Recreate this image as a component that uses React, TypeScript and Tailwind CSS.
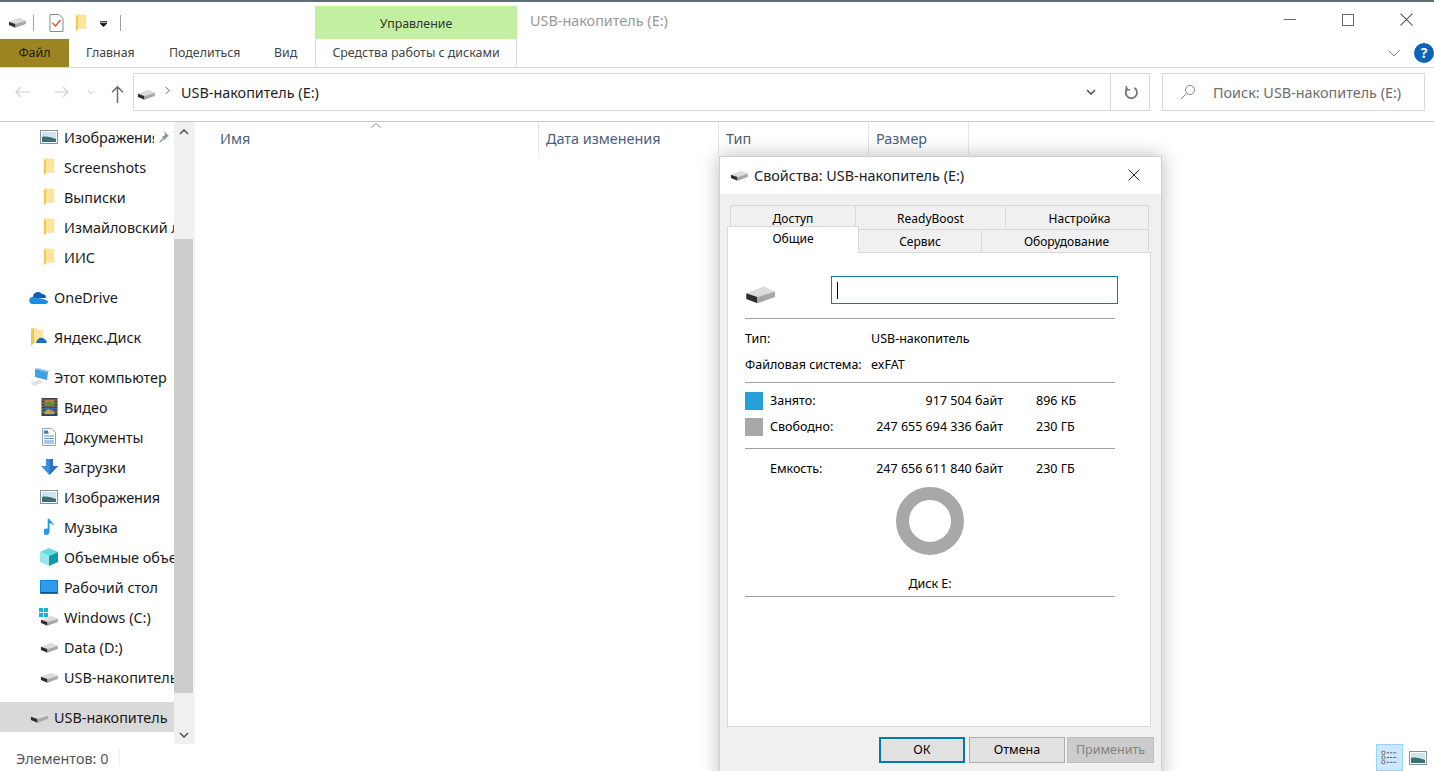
import React from "react";

function Drive({ className = "w-[18px] h-[11px]", led = false }: { className?: string; led?: boolean }) {
  return (
    <svg viewBox="0 0 24 15" className={`shrink-0 ${className}`}>
      <polygon points="1,6.500 15,1 24,5 10,9.500" fill="#dcdcdc" />
      <polygon points="1,6.500 10,9.500 10,14.500 1,11" fill="#2e2e2e" />
      <polygon points="10,9.500 24,5 24,9.500 10,14.500" fill="#a8a8a8" />
      {led && <rect x="12" y="10.500" width="1.500" height="1.200" fill="#3fd07a" />}
    </svg>
  );
}

function Folder() {
  return (
    <svg viewBox="0 0 14 18" className="w-[13px] h-[18px] shrink-0">
      <polygon points="1,0 7,0 7,2 12,2 12,15 1,15" fill="#f6d670" />
      <polygon points="1,2 4,0 12,0 12,14 4,15 1,18" fill="#fce49a" />
      <polygon points="1,1 3,1 3,16 1,18" fill="#efc654" />
    </svg>
  );
}

function Picture() {
  return (
    <svg viewBox="0 0 18 14" className="w-[18px] h-[14px] shrink-0">
      <rect x="0.5" y="0.5" width="17" height="13" fill="#fff" stroke="#8a9299" />
      <rect x="2" y="2" width="14" height="10" fill="#cfe3ee" />
      <path d="M2 7c4-1 9 0 14 2v3H2z" fill="#3f6f73" />
    </svg>
  );
}

function OneDrive() {
  return (
    <svg viewBox="0 0 20 13" className="w-[20px] h-[13px] shrink-0">
      <path d="M4 6a5 5 0 0 1 9-3 4 4 0 0 1 4 4H4z" fill="#0f5fb0" />
      <path d="M4 13a3.500 3.500 0 0 1-.5-7l3 .5 8 1.500 4.500 2a3 3 0 0 1-2 3z" fill="#1e8fe0" />
    </svg>
  );
}

function Yandex() {
  return (
    <svg viewBox="0 0 18 18" className="w-[18px] h-[18px] shrink-0">
      <polygon points="1,0 7,0 7,2 13,2 13,15 1,15" fill="#fce49a" />
      <polygon points="1,2 4,0 4,15 1,18" fill="#efc654" />
      <path d="M6 15c1-4 4-6 6-5 2 0 4 2 5 4l-1 1z" fill="#1c6fc0" />
    </svg>
  );
}

function Computer() {
  return (
    <svg viewBox="0 0 20 18" className="w-[20px] h-[18px] shrink-0">
      <polygon points="6,1 19,4 18,12 6,9" fill="#3fa0e0" />
      <polygon points="6,1 8,0 20,3 19,4" fill="#7cc4ef" />
      <polygon points="1,15 10,12 15,14 5,18" fill="#dfe3e6" />
    </svg>
  );
}

function Video() {
  return (
    <svg viewBox="0 0 16 18" className="w-[17px] h-[18px] shrink-0">
      <rect width="16" height="18" fill="#3a3f44" />
      <rect x="3" y="1.500" width="10" height="7" fill="#c47a3c" />
      <rect x="3" y="9.500" width="10" height="7" fill="#2f6fb0" />
      <path d="M3 6l4-3 3 2 3-2v5H3z" fill="#5c8f3a" />
      <path d="M3 14l4-3 6 3v2H3z" fill="#c9a13c" />
      <path d="M1 2h1M1 5h1M1 8h1M1 11h1M1 14h1M14 2h1M14 5h1M14 8h1M14 11h1M14 14h1" stroke="#dfe3e6" />
    </svg>
  );
}

function Doc() {
  return (
    <svg viewBox="0 0 14 18" className="w-[14px] h-[18px] shrink-0">
      <path d="M.5.5h9l4 4v13H.5z" fill="#fff" stroke="#9aa3ab" />
      <path d="M2 5h5M2 8h10M2 10.500h10M2 13h10M2 15h10" stroke="#5b93c8" strokeWidth="1" />
      <rect x="2" y="2.500" width="4" height="3" fill="#2f80c8" />
    </svg>
  );
}

function Download() {
  return (
    <svg viewBox="0 0 17 16" className="w-[17px] h-[16px] shrink-0">
      <path d="M5 0h7v7h5l-8.500 9L0 7h5z" fill="#3f8fdf" />
      <path d="M8.500 0H12v7h5l-8.500 9z" fill="#2a73c4" />
    </svg>
  );
}

function Music() {
  return (
    <svg viewBox="0 0 12 18" className="w-[11px] h-[18px] shrink-0">
      <path d="M4 0h2c.5 3 5 4 5 8-1-2-3-3-5-3v9a3.500 3.500 0 1 1-2-3z" fill="#1e9be8" />
    </svg>
  );
}

function Cube() {
  return (
    <svg viewBox="0 0 18 18" className="w-[18px] h-[18px] shrink-0">
      <polygon points="9,0 18,4 9,8 0,4" fill="#63dbe0" />
      <polygon points="0,4 9,8 9,18 0,14" fill="#9ce6e8" />
      <polygon points="18,4 9,8 9,18 18,14" fill="#0d9bb0" />
    </svg>
  );
}

function Desktop() {
  return (
    <svg viewBox="0 0 18 14" className="w-[18px] h-[14px] shrink-0">
      <rect width="18" height="14" fill="#0f7fd8" />
      <path d="M1 1h16v11H1z" fill="#2f9bec" />
      <path d="M1 12h16v1H1z" fill="#0b4f8c" />
    </svg>
  );
}

function WinDrive() {
  return (
    <span className="relative flex w-[18px] h-[18px] items-end">
      <Drive />
      <svg viewBox="0 0 10 10" className="absolute -left-[1px] top-0 w-[10px] h-[10px]">
        <path d="M0 0h4v4H0zM5 0h4v4H5zM0 5h4v4H0zM5 5h4v4H5z" fill="#19b5d8" />
      </svg>
    </span>
  );
}

type NavItem = { label: string; icon: React.ReactNode; top: boolean; gap?: boolean; pin?: boolean; active?: boolean };

const navItems: NavItem[] = [
  { label: "Изображения", icon: <Picture />, top: false, pin: true },
  { label: "Screenshots", icon: <Folder />, top: false },
  { label: "Выписки", icon: <Folder />, top: false },
  { label: "Измайловский лес", icon: <Folder />, top: false },
  { label: "ИИС", icon: <Folder />, top: false },
  { label: "OneDrive", icon: <OneDrive />, top: true, gap: true },
  { label: "Яндекс.Диск", icon: <Yandex />, top: true, gap: true },
  { label: "Этот компьютер", icon: <Computer />, top: true, gap: true },
  { label: "Видео", icon: <Video />, top: false },
  { label: "Документы", icon: <Doc />, top: false },
  { label: "Загрузки", icon: <Download />, top: false },
  { label: "Изображения", icon: <Picture />, top: false },
  { label: "Музыка", icon: <Music />, top: false },
  { label: "Объемные объекты", icon: <Cube />, top: false },
  { label: "Рабочий стол", icon: <Desktop />, top: false },
  { label: "Windows (C:)", icon: <WinDrive />, top: false },
  { label: "Data (D:)", icon: <Drive />, top: false },
  { label: "USB-накопитель (E:)", icon: <Drive />, top: false },
  { label: "USB-накопитель", icon: <Drive />, top: true, gap: true, active: true },
];

function Sidebar() {
  return (
    <div className="flex w-[193px] shrink-0">
      <div className="w-[174px] overflow-hidden">
        {navItems.map((item, i) => (
          <div key={i} className={`flex items-center h-[30px] ${item.gap ? "mt-[10px]" : ""} ${item.active ? "bg-[#d9d9d9]" : ""} ${item.top ? "pl-[30px]" : "pl-[40px]"}`}>
            <span className="w-[18px] flex justify-center items-center shrink-0">{item.icon}</span>
            <span className={`ml-[6px] pt-[2px] whitespace-nowrap overflow-hidden ${item.pin ? "w-[90px]" : "flex-1"}`}>{item.label}</span>
            {item.pin && (
              <svg viewBox="0 0 12 12" className="w-[12px] h-[12px] shrink-0 ml-[3px]">
                <path d="M7 0l5 5-2 1-2 3-1-1-3 3-2 1 1-2 3-3-1-1 3-2z" fill="#8a98a6" />
              </svg>
            )}
          </div>
        ))}
      </div>
      <div className="w-[19px] flex flex-col bg-[#f0f0f0]">
        <div className="h-[117px] flex justify-center pt-[6px]">
          <svg viewBox="0 0 10 6" className="w-[10px] h-[6px] mt-[1px]">
            <path d="M1 5l4-4 4 4" fill="none" stroke="#505050" strokeWidth="1.500" />
          </svg>
        </div>
        <div className="h-[454px] bg-[#cdcdcd]" />
        <div className="flex-1 flex justify-center items-end pb-[6px]">
          <svg viewBox="0 0 10 6" className="w-[10px] h-[6px]">
            <path d="M1 1l4 4 4-4" fill="none" stroke="#505050" strokeWidth="1.500" />
          </svg>
        </div>
      </div>
    </div>
  );
}

function Columns() {
  const cols = [
    { label: "Имя", w: "w-[344px] pl-[25px]" },
    { label: "Дата изменения", w: "w-[180px] pl-[7px]" },
    { label: "Тип", w: "w-[150px] pl-[7px]" },
    { label: "Размер", w: "w-[100px] pl-[7px]" },
  ];
  return (
    <div className="flex-1 border-l-2 border-[#f4f4f4] relative">
      <div className="flex h-[32px]">
        {cols.map((c) => (
          <div key={c.label} className={`${c.w} border-r border-[#e5e5e5] flex items-center pt-[2px] text-[#4c607a]`}>
            {c.label}
          </div>
        ))}
      </div>
      <svg viewBox="0 0 10 5" className="absolute left-[176px] top-[1px] w-[10px] h-[5px]">
        <path d="M.5 4.500L5 .5l4.500 4" fill="none" stroke="#8a8a8a" />
      </svg>
    </div>
  );
}

function Tab({ label, className }: { label: string; className: string }) {
  return (
    <div className={`flex justify-center items-center bg-[#f0f0f0] border border-[#d9d9d9] border-b-0 text-[12px] ${className}`}>
      {label}
    </div>
  );
}

function Rule() {
  return <div className="h-px bg-[#a0a0a0] w-[370px]" />;
}

function SpaceRow({ swatch, label, bytes, size, h }: { swatch?: string; label: string; bytes: string; size: string; h: string }) {
  return (
    <div className={`flex items-center ${h}`}>
      {swatch ? <span className={`w-[18px] h-[18px] mr-[7px] ${swatch}`} /> : <span className="w-[25px]" />}
      <span className="w-[100px]">{label}</span>
      <span className="w-[133px] text-right whitespace-nowrap">{bytes}</span>
      <span className="ml-[33px]">{size}</span>
    </div>
  );
}

function PropertiesDialog() {
  return (
    <div className="absolute left-[719px] top-[156px] w-[443px] h-[625px] bg-[#f0f0f0] border border-[#d0d0d0] shadow-[0_0_18px_rgba(0,0,0,0.28)] text-[12.5px] text-black flex flex-col">
      <div className="h-[37px] bg-white flex items-center pl-[10px] pr-[21px] text-[14.4px] text-[#222]">
        <Drive />
        <span className="ml-[6px] flex-1">Свойства: USB-накопитель (E:)</span>
        <svg viewBox="0 0 12 12" className="w-[12px] h-[12px] -mt-[2px]">
          <path d="M.5.5l11 11M11.500.5l-11 11" stroke="#222" strokeWidth="1" />
        </svg>
      </div>
      <div className="flex ml-[10px] mt-[11px] h-[23px]">
        <Tab label="Доступ" className="w-[126px] pt-[4px]" />
        <Tab label="ReadyBoost" className="w-[151px] -ml-px pt-[4px]" />
        <Tab label="Настройка" className="w-[144px] -ml-px pl-[5px] pt-[4px]" />
      </div>
      <div className="flex ml-[7px] h-[24px] items-end relative z-10">
        <div className="w-[132px] h-[27px] bg-white border border-[#d9d9d9] border-b-0 flex justify-center items-center -mb-px relative z-10 pb-[2px] text-[12px]">Общие</div>
        <Tab label="Сервис" className="w-[124px] h-[23px] -ml-px pt-[2px]" />
        <Tab label="Оборудование" className="w-[168px] h-[23px] -ml-px pt-[2px] pl-[3px]" />
      </div>
      <div className="ml-[7px] mr-[10px] h-[475px] bg-white border border-[#d9d9d9] pl-[17px] flex flex-col">
        <div className="flex h-[65px]">
          <div className="pt-[32px] w-[86px]">
            <Drive className="w-[30px] h-[19px]" led />
          </div>
          <div className="mt-[23px] w-[287px] h-[28px] border border-[#0a7ea8] flex items-center pl-[5px]">
            <div className="w-px h-[17px] bg-black" />
          </div>
        </div>
        <Rule />
        <div className="flex items-center h-[40px]">
          <span className="w-[126px]">Тип:</span>
          <span>USB-накопитель</span>
        </div>
        <div className="flex items-center h-[12px]">
          <span className="w-[126px] whitespace-nowrap">Файловая система:</span>
          <span>exFAT</span>
        </div>
        <div className="h-[11px]" />
        <Rule />
        <SpaceRow swatch="bg-[#26a0da]" label="Занято:" bytes="917 504 байт" size="896 КБ" h="h-[35px] pt-[1px]" />
        <SpaceRow swatch="bg-[#a8a8a8]" label="Свободно:" bytes="247 655 694 336 байт" size="230 ГБ" h="h-[18px]" />
        <div className="h-[12px]" />
        <Rule />
        <SpaceRow label="Емкость:" bytes="247 656 611 840 байт" size="230 ГБ" h="h-[38px] pt-[2px]" />
        <div className="w-[370px] flex justify-center">
          <div className="w-[68px] h-[68px] rounded-full border-[13px] border-[#a8a8a8]" />
        </div>
        <div className="w-[370px] text-center mt-[20px] h-[17px]">Диск E:</div>
        <div className="h-[4px]" />
        <Rule />
      </div>
      <div className="flex justify-end gap-[2px] pr-[7px] mt-[10px]">
        <button className="w-[86px] h-[26px] bg-[#e1e1e1] border-2 border-[#0078b0] mr-[2px]">ОК</button>
        <button className="w-[96px] h-[26px] bg-[#e1e1e1] border border-[#adadad]">Отмена</button>
        <button className="w-[87px] h-[26px] bg-[#cccccc] border border-[#bfbfbf] text-[#838383]">Применить</button>
      </div>
    </div>
  );
}

export default function App() {
  return (
    <div className="relative w-[1434px] h-[771px] overflow-hidden bg-white flex flex-col text-[14.4px] text-[#1a1a1a] font-['Noto_Sans',sans-serif]">
      <div className="h-[2px] bg-[#5f6d79]" />

      {/* title row */}
      <div className="h-[37px] flex items-start">
        <div className="w-[315px] h-[37px] flex items-center pl-[8px] pt-[4px]">
          <Drive />
          <div className="w-px h-[16px] bg-[#a0a0a0] ml-[7px] mr-[15px]" />
          <svg viewBox="0 0 14 18" className="w-[15px] h-[18px]">
            <path d="M.5.5h9l4 4v13H.5z" fill="#fff" stroke="#8a8a8a" />
            <path d="M3 9l3 3 5-6" fill="none" stroke="#d8582a" strokeWidth="1.500" />
          </svg>
          <span className="ml-[11px]"><Folder /></span>
          <svg viewBox="0 0 8 6" className="w-[7px] h-[6px] ml-[12px] mt-[2px]">
            <path d="M0 0h8M0 2h8l-4 4z" stroke="#111" strokeWidth="1" fill="#111" />
          </svg>
          <div className="w-px h-[16px] bg-[#a0a0a0] ml-[13px]" />
        </div>
        <div className="w-[202px] h-[33px] mt-[4px] pt-[4px] bg-[#c2f0a0] flex items-center justify-center text-[12.4px] text-[#333]">Управление</div>
        <div className="ml-[13px] h-[33px] mt-[2px] flex items-center text-[#999] flex-1">USB-накопитель (E:)</div>
        <div className="flex items-center gap-[46px] pt-[11px] pr-[21px]">
          <div className="w-[12px] h-px bg-[#666]" />
          <div className="w-[12px] h-[12px] border border-[#666]" />
          <svg viewBox="0 0 12 12" className="w-[13px] h-[13px]">
            <path d="M.5.5l11 11M11.500.5l-11 11" stroke="#555" strokeWidth="1" />
          </svg>
        </div>
      </div>

      {/* ribbon tabs */}
      <div className="h-[29px] flex items-stretch border-b border-[#dadada] text-[12.4px] text-[#444]">
        <div className="w-[69px] bg-[#9c8420] text-[#1a1a1a] flex items-center justify-center">Файл</div>
        <div className="w-[100px] flex items-center pl-[17px]">Главная</div>
        <div className="w-[105px] flex items-center">Поделиться</div>
        <div className="w-[41px] flex items-center">Вид</div>
        <div className="w-[202px] border-x border-[#dadada] flex items-center justify-center">Средства работы с дисками</div>
        <div className="flex-1 flex items-center justify-end">
          <svg viewBox="0 0 12 7" className="w-[12px] h-[7px] mr-[14px]">
            <path d="M.5.5L6 6l5.500-5.500" fill="none" stroke="#8a8a8a" />
          </svg>
          <span className="w-[20px] h-[20px] rounded-full bg-[#0e62b8] text-white text-[14px] font-bold flex items-center justify-center -mt-[1px]">?</span>
        </div>
      </div>

      {/* address row */}
      <div className="h-[54px] flex items-center border-b border-[#c8c8c8] pb-[5px]">
        <div className="w-[133px] flex items-center pl-[15px]">
          <svg viewBox="0 0 16 12" className="w-[16px] h-[12px]">
            <path d="M15 6H1M6 1L1 6l5 5" fill="none" stroke="#d0d0d0" strokeWidth="1.200" />
          </svg>
          <svg viewBox="0 0 16 12" className="w-[16px] h-[12px] ml-[22px]">
            <path d="M1 6h14M10 1l5 5-5 5" fill="none" stroke="#d0d0d0" strokeWidth="1.200" />
          </svg>
          <svg viewBox="0 0 10 6" className="w-[8px] h-[5px] ml-[18px]">
            <path d="M1 1l4 4 4-4" fill="none" stroke="#d0d0d0" strokeWidth="1.200" />
          </svg>
          <svg viewBox="0 0 14 20" className="w-[13px] h-[18px] ml-[16px] mt-[4px]">
            <path d="M7 20V2M1 8l6-6 6 6" fill="none" stroke="#666" strokeWidth="1.600" />
          </svg>
        </div>
        <div className="w-[1017px] h-[38px] border border-[#d9d9d9] flex items-center pl-[3px]">
          <Drive className="w-[18px] h-[11px] mt-[4px]" />
          <svg viewBox="0 0 6 10" className="w-[5px] h-[9px] ml-[10px] -mt-[3px]">
            <path d="M1 1l4 4-4 4" fill="none" stroke="#666" strokeWidth="1.200" />
          </svg>
          <span className="ml-[11px] flex-1 pt-[2px] text-[#1f1f1f]">USB-накопитель (E:)</span>
          <svg viewBox="0 0 10 6" className="w-[10px] h-[6px] mr-[14px]">
            <path d="M1 1l4 4 4-4" fill="none" stroke="#555" strokeWidth="1.600" />
          </svg>
          <div className="w-[39px] h-full border-l border-[#d9d9d9] flex items-center justify-center">
            <svg viewBox="0 0 16 16" className="w-[15px] h-[15px] ml-[2px]">
              <path d="M4 3.500a6 6 0 1 0 7-.5" fill="none" stroke="#777" strokeWidth="2" />
              <path d="M2.500 1v4h4" fill="none" stroke="#777" strokeWidth="1.600" />
            </svg>
          </div>
        </div>
        <div className="ml-[12px] w-[263px] h-[38px] border border-[#d9d9d9] flex items-center pl-[17px] text-[#6d6d6d]">
          <svg viewBox="0 0 16 16" className="w-[16px] h-[16px]">
            <circle cx="10" cy="6" r="4.500" fill="none" stroke="#8a8a8a" />
            <path d="M6.500 9.500L1 15" stroke="#8a8a8a" />
          </svg>
          <span className="ml-[17px] pt-[2px]">Поиск: USB-накопитель (E:)</span>
        </div>
      </div>

      {/* body */}
      <div className="flex h-[622px]">
        <Sidebar />
        <Columns />
      </div>

      {/* status bar */}
      <div className="flex-1 flex items-center pl-[16px] text-[#555]">
        <span className="w-[103px] pt-[3px]">Элементов: 0</span>
        <div className="w-px h-[17px] bg-[#eeeeee]" />
        <div className="flex-1" />
        <div className="w-[27px] h-[27px] bg-[#cce8ff] border border-[#99d1ff] flex items-center justify-center">
          <svg viewBox="0 0 18 16" className="w-[17px] h-[16px]">
            <path d="M1 1h3v3H1zM1 6h3v3H1zM1 11h3v3H1z" fill="#fff" stroke="#555" strokeWidth=".8" />
            <path d="M6 2.500h11M6 7.500h11M6 12.500h11" stroke="#555" strokeDasharray="2.500 1" />
          </svg>
        </div>
        <div className="ml-[6px] mr-[7px]"><Picture /></div>
      </div>

      <PropertiesDialog />
    </div>
  );
}
